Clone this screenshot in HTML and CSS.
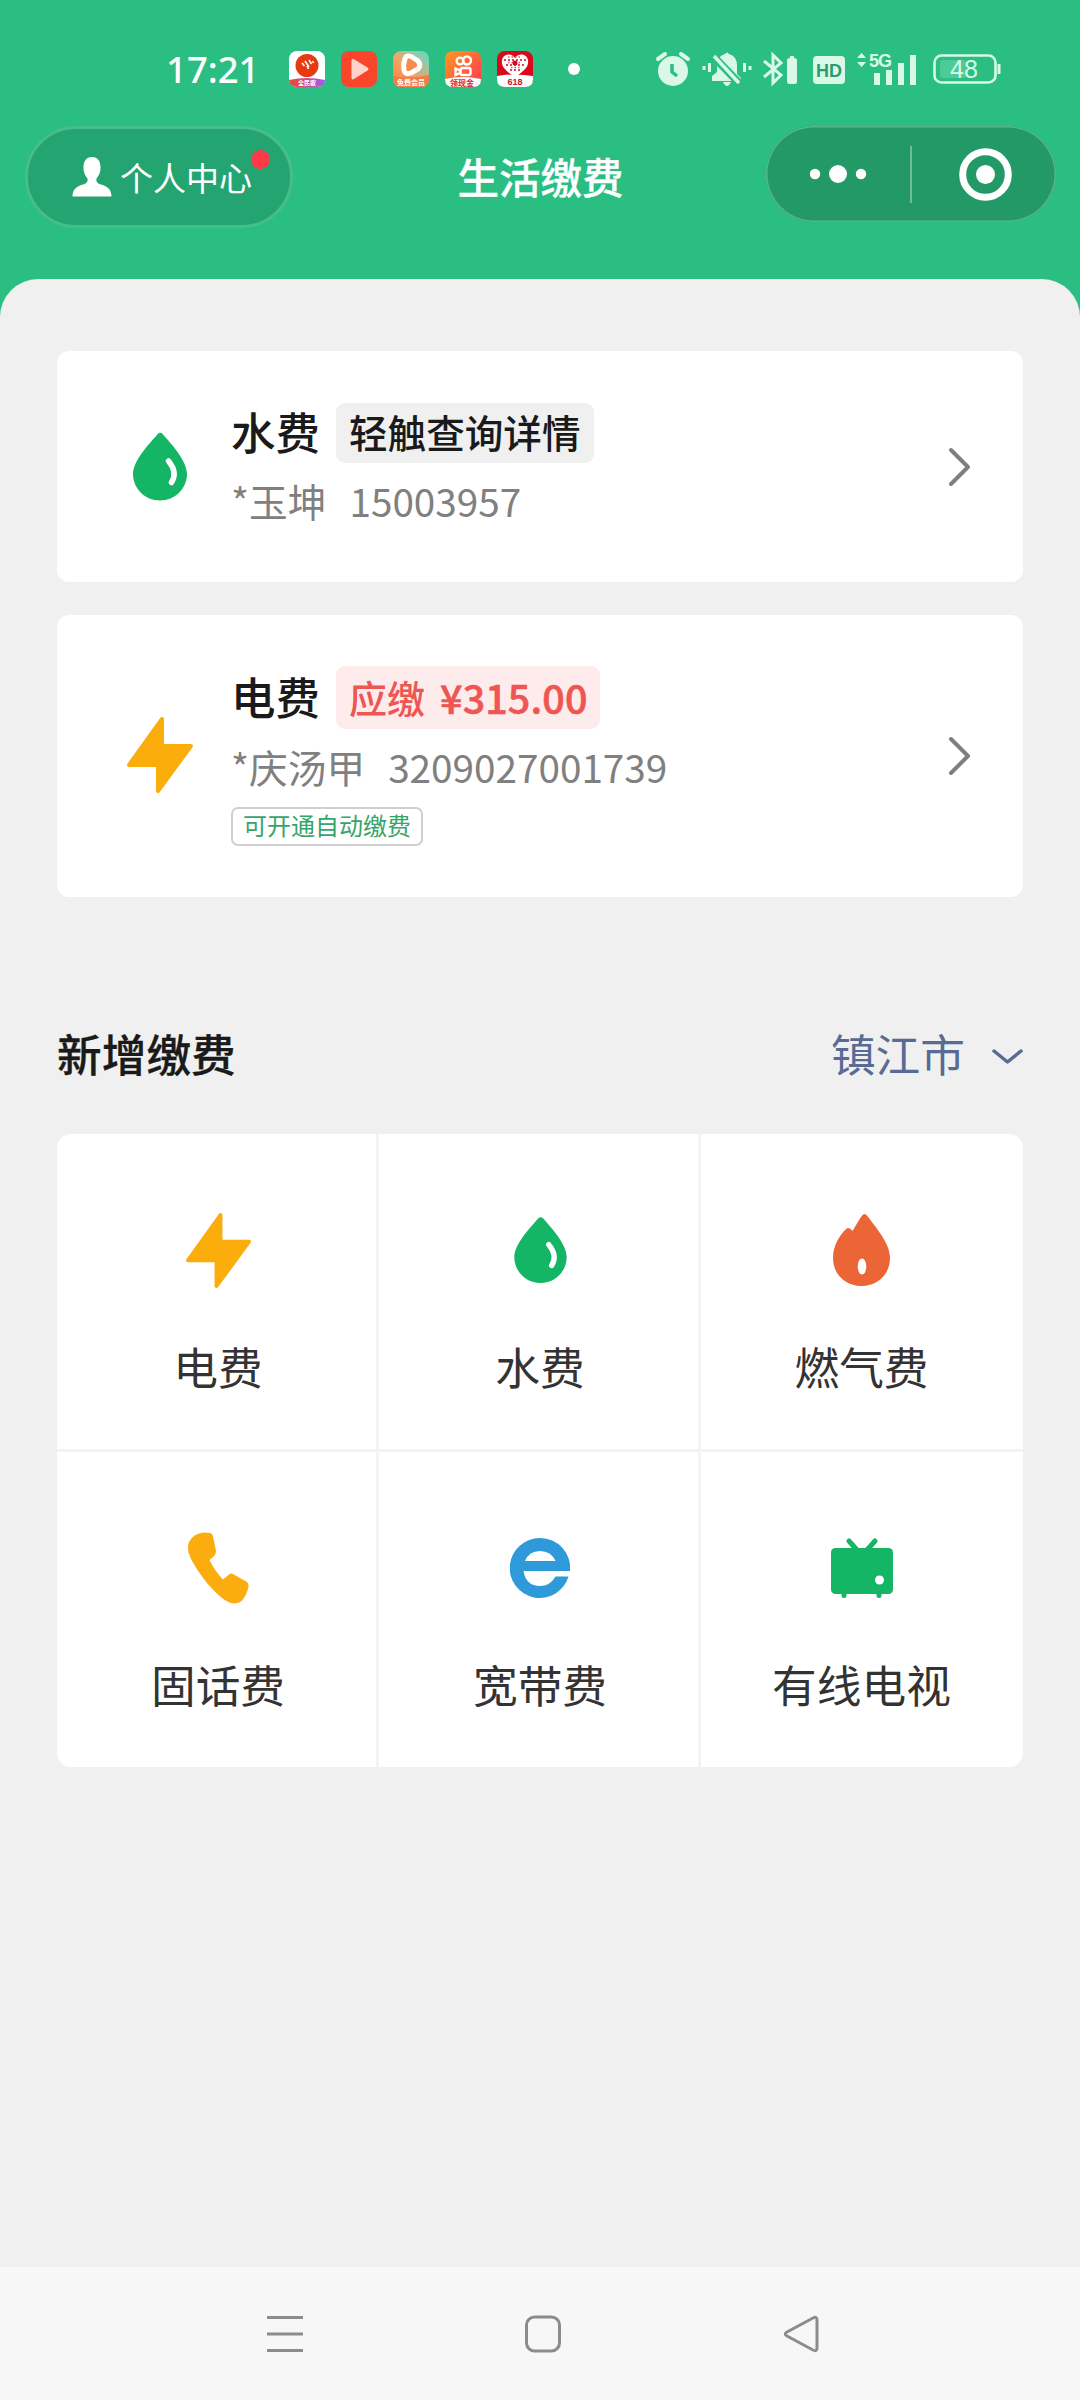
FILE: index.html
```html
<!DOCTYPE html>
<html lang="zh-CN">
<head>
<meta charset="utf-8">
<title>生活缴费</title>
<link rel="stylesheet" href="styles.css">
</head>
<body>
<svg class="defs" width="0" height="0" aria-hidden="true">
  <defs>
    <linearGradient id="g-orange" x1="0" y1="0" x2="1" y2="1"><stop offset="0" stop-color="#ff9a1f"/><stop offset="1" stop-color="#ff3355"/></linearGradient>
    <linearGradient id="g-teal" x1="0" y1="1" x2="1" y2="0"><stop offset="0" stop-color="#ff7a35"/><stop offset=".45" stop-color="#f3a468"/><stop offset="1" stop-color="#55e0d0"/></linearGradient>
    <linearGradient id="g-band" x1="0" y1="0" x2="1" y2="0"><stop offset="0" stop-color="#f2452f"/><stop offset="1" stop-color="#a05af0"/></linearGradient>
    <symbol id="drop" viewBox="0 0 54 68"><path fill="#14b565" d="M24.800 1.400Q27.200-1 29.600 1.400C38 11 54 28 54 41.500C54 56 42 68 27 68S0 56 0 41.500C0 28 16.500 11 24.800 1.400Z"/><path d="M35.500 28.500Q45 40 38.500 50" fill="none" stroke="#fff" stroke-width="5.500" stroke-linecap="round"/></symbol>
    <symbol id="bolt" viewBox="0 0 66 76"><path fill="#fbad0b" stroke="#fbad0b" stroke-width="4" stroke-linejoin="round" d="M35 2V29H64L31 74V48H2Z"/></symbol>
  </defs>
</svg>
<header class="top">
  <div class="status">
    <span class="time">17:21</span>
    <div class="apps">
      <svg class="app" viewBox="0 0 36 36"><rect width="36" height="36" rx="8" fill="#fff"/><path d="M0 29Q18 25 36 29Q35 36 28 36H8Q1 36 0 29Z" fill="url(#g-band)"/><circle cx="18" cy="14.500" r="11.500" fill="#e83a10"/><path d="M13 12l2.500 3M16 10l4 6M20 9l2.500 4M23.500 10l1 2M18 15l1.500 3" stroke="#fff" stroke-width="1.600"/><text x="18" y="34" class="app-text app-text--white app-text--small">全民歌</text></svg>
      <svg class="app" viewBox="0 0 36 36"><rect width="36" height="36" rx="8" fill="#f8452c"/><path d="M10.500 9.500Q10.500 7 13 8.300L26.500 16.500Q28.500 18 26.500 19.500L13 28Q10.500 29.300 10.500 27Z" fill="#ffd3cc"/></svg>
      <svg class="app" viewBox="0 0 36 36"><rect width="36" height="36" rx="8" fill="url(#g-teal)"/><path d="M0 25Q18 28 36 24V28Q36 36 28 36H8Q0 36 0 28Z" fill="#f77b48"/><path d="M12 8Q13 3.500 18 5.500L25 10Q28.500 14 25 18L18 22Q12 24 11 19Q10 13 12 8Z" fill="#f58b4e" stroke="#fff" stroke-width="5"/><text x="18" y="34" class="app-text app-text--white">免费会员</text></svg>
      <svg class="app" viewBox="0 0 36 36"><rect width="36" height="36" rx="8" fill="url(#g-orange)"/><path d="M0 28Q18 24 36 28Q36 36 28 36H8Q0 36 0 28Z" fill="#fff"/><g fill="none" stroke="#fff" stroke-width="2.400"><circle cx="15" cy="10" r="3.400"/><circle cx="22" cy="9.500" r="4"/><rect x="15.500" y="17" width="10" height="7" rx="2"/><path d="M15 19.500L10.500 17.500V24L15 22Z"/></g><text x="17" y="34.500" class="app-text app-text--red">领现金</text></svg>
      <svg class="app" viewBox="0 0 36 36"><rect width="36" height="36" rx="8" fill="#d9081c"/><path d="M0 25Q18 22 36 25V28Q36 36 28 36H8Q0 36 0 28Z" fill="#fff"/><path d="M18 26C9 20 4 16 5 9C6 3 14 1 18 7C22 1 30 3 31 9C32 16 27 20 18 26Z" fill="#fff"/><path d="M7 9h22M9 14h18M13 19h10" stroke="#d9081c" stroke-width="1.700" stroke-dasharray="2 2"/><path d="M11 6h14M11 11.500h14M14 16.500h9" stroke="#e05765" stroke-width="1.500" stroke-dasharray="1.500 2"/><circle cx="18" cy="12" r="2.500" fill="#d9081c"/><text x="18" y="34" class="app-text app-text--618">618</text></svg>
    </div>
    <i class="more-dot"></i>
    <div class="indicators">
      <svg width="34" height="36" viewBox="0 0 34 36"><circle cx="17" cy="20" r="15" fill="#d9f8e8"/><path d="M2 8L9 3M25 3L32 8" stroke="#d9f8e8" stroke-width="4" stroke-linecap="round"/><path d="M16 13V21L21 25" fill="none" stroke="#2abe83" stroke-width="3.500"/></svg>
      <svg class="ind-bell" width="50" height="36" viewBox="0 0 50 36"><path fill="#d9f8e8" d="M23 3Q25 0 27 3Q35 5 35 15V23L39 27V30H10V25L15 21V15Q15 5 23 3ZM21 31h8Q27 35 25 35T21 31Z"/><path d="M10 4L38 33" stroke="#2abe83" stroke-width="8"/><path d="M12 5L37 32" stroke="#d9f8e8" stroke-width="3.500"/><path d="M2 15v4M7.500 12v9M42.500 12v9M48 15v4" stroke="#d9f8e8" stroke-width="3"/></svg>
      <svg class="ind-bt" width="35" height="36" viewBox="0 0 35 36"><path d="M1 10L18 24L10 32V4L18 12L1 26" fill="none" stroke="#d9f8e8" stroke-width="3"/><rect x="24" y="7" width="10" height="26" rx="2.500" fill="#d9f8e8"/><rect x="27" y="5" width="4" height="3" fill="#d9f8e8"/></svg>
      <svg class="ind-hd" width="32" height="36" viewBox="0 0 32 36"><rect y="5" width="32" height="28" rx="4" fill="#d9f8e8"/><text x="16" y="26" class="hd">HD</text></svg>
      <svg class="ind-sig" width="61" height="36" viewBox="0 0 61 36"><path d="M1 7L5.500 2L10 7ZM1 11H10L5.500 16ZM18 22h6v12h-6ZM30 19h6v15h-6ZM42 12h6v22h-6ZM54 4h6v30h-6Z" fill="#d9f8e8"/><text x="13" y="16" class="g5">5G</text></svg>
      <svg class="ind-bat" width="68" height="36" viewBox="0 0 68 36"><rect x="1.500" y="4.500" width="61" height="27" rx="7" fill="none" stroke="#d9f8e8" stroke-width="2.600"/><rect x="7" y="9" width="26" height="18" rx="3" fill="#4dcb97"/><path d="M66 13v10" stroke="#d9f8e8" stroke-width="3"/><text x="31" y="27" class="bat">48</text></svg>
    </div>
  </div>
  <nav class="titlebar">
    <button class="me">
      <svg width="40" height="40" viewBox="0 0 40 40"><path fill="#fff" d="M20 0C26 0 28.500 4.500 28.500 10.500C28.500 16 26.500 19 24.500 21.500C24 25 25 26 29 27.500C36 29.500 39.500 33 39.500 39.500H.5C.5 33 4 29.500 11 27.500C15 26 16 25 15.500 21.500C13.500 19 11.500 16 11.500 10.500C11.500 4.500 14 0 20 0Z"/></svg>
      <span>个人中心</span><i class="badge"></i>
    </button>
    <h1>生活缴费</h1>
    <div class="capsule">
      <svg width="290" height="96" viewBox="0 0 290 96" fill="#fff"><circle cx="49" cy="48" r="5.200"/><circle cx="72" cy="48" r="9"/><circle cx="95" cy="48" r="5.200"/><rect x="144" y="20" width="2" height="57" opacity=".35"/><circle cx="219.500" cy="48.500" r="22.800" fill="none" stroke="#fff" stroke-width="7"/><circle cx="219.500" cy="48.500" r="9.500"/></svg>
    </div>
  </nav>
</header>
<main class="sheet">
  <section class="bills">
    <article class="bill">
      <div class="bill-icon"><svg width="54" height="69"><use href="#drop"/></svg></div>
      <div class="info">
        <div class="head"><h2>水费</h2><span class="tag">轻触查询详情</span></div>
        <p class="account"><span>*玉坤</span><span>15003957</span></p>
      </div>
      <svg class="arrow" width="24" height="40" viewBox="0 0 24 40"><path d="M3 3L20 20L3 37"/></svg>
    </article>
    <article class="bill bill--due">
      <div class="bill-icon"><svg width="66" height="76"><use href="#bolt"/></svg></div>
      <div class="info">
        <div class="head"><h2>电费</h2><span class="tag tag--due"><span>应缴</span><b>¥315.00</b></span></div>
        <p class="account"><span>*庆汤甲</span><span>3209027001739</span></p>
        <span class="auto">可开通自动缴费</span>
      </div>
      <svg class="arrow" width="24" height="40" viewBox="0 0 24 40"><path d="M3 3L20 20L3 37"/></svg>
    </article>
  </section>
  <div class="section-head">
    <h2>新增缴费</h2>
    <div class="city"><span>镇江市</span><svg width="32" height="18" viewBox="0 0 32 18"><path d="M3 3L16.500 14L30 3"/></svg></div>
  </div>
  <section class="grid">
    <div class="cell"><div class="pic"><svg width="65" height="75"><use href="#bolt"/></svg></div><span>电费</span></div>
    <div class="cell"><div class="pic"><svg width="53" height="66"><use href="#drop"/></svg></div><span>水费</span></div>
    <div class="cell"><div class="pic"><svg width="57" height="72" viewBox="0 0 57 72"><path fill="#eb6536" d="M29 1.500Q31.500-1.500 34 1.500C43 14 57 29 57 44C57 60 45 72 28.500 72S0 60 0 44C0 32 6 22 13.500 14.500Q16.500 13 19.500 17C23 11 26 6 29 1.500Z"/><ellipse cx="29" cy="52.500" rx="4.300" ry="8" fill="#fff"/></svg></div><span>燃气费</span></div>
    <div class="cell"><div class="pic"><svg width="62" height="72" viewBox="0 0 62 72"><path fill="#fbad0f" d="M7 4Q14-1 23 1Q25 1 26 4L29 19Q29 22 27 24L22.500 28Q27 38 36 47.500L42 42.500Q44 41 46 42L60 50Q62 52 61.500 55Q59.500 64 54 69.500Q47 74 38.500 68.500C26 60 13 44 4 27Q-3.500 12 7 4Z"/></svg></div><span>固话费</span></div>
    <div class="cell"><div class="pic"><svg width="60" height="60" viewBox="0 0 60 60"><path fill="#2f9ad9" fill-rule="evenodd" d="M30 0A30 30 0 0 1 60 33H13.500Q16 48 30 48Q40 48 45.500 38.500H58.500A30 30 0 1 1 30 0ZM15 23H45.500Q41 13 30 13T15 23Z"/></svg></div><span>宽带费</span></div>
    <div class="cell"><div class="pic"><svg width="62" height="60" viewBox="0 0 62 60"><rect y="10" width="62" height="46" rx="4.500" fill="#14b565"/><path d="M18 3L26 12M44 3L36 12M13 55v2.500M48 55v2.500" stroke="#14b565" stroke-width="5" stroke-linecap="round"/><circle cx="48.500" cy="42" r="4.500" fill="#fff"/></svg></div><span>有线电视</span></div>
  </section>
</main>
<footer class="nav">
  <svg width="36" height="38" viewBox="0 0 36 38"><path d="M0 2.500H36M0 19H36M0 35.500H36"/></svg>
  <svg width="36" height="38" viewBox="0 0 36 38"><rect x="1.500" y="2" width="33" height="34" rx="8"/></svg>
  <svg width="36" height="38" viewBox="0 0 36 38"><path d="M30 3Q34 1 34 5V33Q34 37 30 35L4 21Q.5 19 4 17Z"/></svg>
</footer>
</body>
</html>
```
FILE: styles.css
```css
* { box-sizing: border-box; margin: 0; padding: 0; }

body {
  width: 1080px;
  height: 2400px;
  display: flex;
  flex-direction: column;
  background: #2abe83;
  font-family: "Noto Sans CJK SC", "Noto Sans", sans-serif;
  color: #1a1a1a;
  overflow: hidden;
}

svg { display: block; flex: none; }
.defs { position: absolute; }

/* Header */
.top { height: 279px; flex: none; }

.status {
  height: 126px;
  padding: 51px 0 0 166px;
  display: flex;
  align-items: flex-start;
}
.time {
  width: 123px;
  font: 500 36.500px/36px "Noto Sans", sans-serif;
  color: #fff;
  white-space: nowrap;
}
.apps { display: flex; gap: 16px; }
.app { width: 36px; height: 36px; }
.app-text { font: 700 7px "Noto Sans CJK SC", sans-serif; text-anchor: middle; }
.app-text--white { fill: #fff; }
.app-text--small { font-size: 6px; }
.app-text--red { fill: #d81e20; font-size: 8px; }
.app-text--618 { fill: #c8142a; font: 700 9px "Liberation Sans", sans-serif; }
.more-dot { width: 12px; height: 12px; border-radius: 50%; background: #fff; margin: 12px 0 0 35px; }
.indicators { display: flex; margin-left: 76px; }
.indicators svg { overflow: visible; }
.ind-bell { margin-left: 12px; }
.ind-bt { margin-left: 11px; }
.ind-hd { margin-left: 15px; }
.ind-sig { margin-left: 11px; }
.ind-bat { margin-left: 16px; }
.hd { font: 700 18px "Liberation Sans", sans-serif; text-anchor: middle; fill: #2a9d70; }
.g5 { font: 700 18px "Liberation Sans", sans-serif; letter-spacing: -1px; fill: #d9f8e8; }
.bat { font: 400 25px "Liberation Sans", sans-serif; text-anchor: middle; fill: #d9f8e8; }

.titlebar {
  height: 103px;
  padding: 0 24px 0 25px;
  display: grid;
  grid-template-columns: 290px 1fr 290px;
  align-items: start;
}
.me {
  position: relative;
  width: 268px;
  height: 102px;
  padding-left: 44px;
  display: flex;
  align-items: center;
  gap: 8px;
  border: 3px solid #47bc8c;
  border-radius: 51px;
  background: #24a470;
  color: #fff;
  font: 400 33px/40px "Noto Sans CJK SC", sans-serif;
}
.badge {
  position: absolute;
  left: 223px;
  top: 21px;
  width: 19px;
  height: 19px;
  border-radius: 50%;
  background: #fc3a48;
}
.titlebar h1 {
  padding-top: 25px;
  text-align: center;
  color: #fff;
  font-size: 41.500px;
  line-height: 50px;
  font-weight: 500;
  -webkit-text-stroke: .3px currentColor;
}
.capsule {
  height: 96px;
  border-radius: 48px;
  background: #229967;
  box-shadow: inset 0 0 0 1.500px #59b58c;
}

/* Content sheet */
.sheet {
  flex: 1;
  padding: 72px 57px 0;
  border-radius: 38px 38px 0 0;
  background: #f0f0f0;
}
.bills { display: flex; flex-direction: column; gap: 33px; }
.bill {
  height: 231px;
  padding: 0 51px 0 67px;
  display: flex;
  align-items: center;
  border-radius: 12px;
  background: #fff;
}
.bill--due { height: 282px; }
.bill-icon { width: 72px; display: flex; justify-content: center; margin-right: 35px; }
.bill--due .bill-icon { padding-bottom: 2px; }
.info { flex: 1; }
.head { display: flex; height: 60px; align-items: center; }
.bill--due .head { height: 63px; }
.head h2 {
  width: 105px;
  padding-bottom: 4px;
  font-size: 44.500px;
  line-height: 57px;
  font-weight: 500;
}
.tag {
  height: 100%;
  padding: 0 14px 3px 13px;
  display: flex;
  align-items: center;
  border-radius: 9px;
  background: #f0f0f0;
  font-size: 38.600px;
  line-height: 56px;
  font-weight: 500;
}
.tag--due { padding: 0 12px 2px 13px; gap: 15px; background: #fdeceb; color: #ef5653; font-size: 38px; }
.tag--due b { font-weight: 500; font-size: 39.500px; letter-spacing: .1px; -webkit-text-stroke: .6px currentColor; }
.account {
  margin-top: 7px;
  display: flex;
  gap: 23px;
  font-size: 38.700px;
  line-height: 61px;
  color: #808080;
}
.auto {
  width: 192px;
  height: 39px;
  margin-top: 10px;
  padding-bottom: 3px;
  display: flex;
  align-items: center;
  justify-content: center;
  border: 2px solid #cfcfcf;
  border-radius: 7px;
  color: #36a56a;
  font-size: 24px;
  line-height: 34px;
}
.arrow path { fill: none; stroke: #7f7f7f; stroke-width: 4; stroke-linecap: round; stroke-linejoin: round; }

.section-head {
  height: 237px;
  padding-top: 74px;
  display: flex;
  align-items: center;
  justify-content: space-between;
}
.section-head h2 { font-size: 44.700px; font-weight: 500; line-height: 80px; -webkit-text-stroke: .3px currentColor; }
.city { display: flex; align-items: center; gap: 26px; color: #576b95; font-size: 44.700px; line-height: 80px; }
.city svg { margin-top: 8px; }
.city path { fill: none; stroke: #576b95; stroke-width: 3.500; stroke-linecap: round; stroke-linejoin: round; }

/* Category grid */
.grid {
  height: 633px;
  display: grid;
  grid-template-columns: 319px 319px 322px;
  grid-template-rows: 1fr 1fr;
  gap: 3px;
  overflow: hidden;
  border-radius: 14px;
  background: #f2f3f4;
}
.cell {
  display: flex;
  flex-direction: column;
  align-items: center;
  padding-top: 70px;
  background: #fff;
  color: #333;
  font-size: 44.700px;
  line-height: 64px;
}
.cell:nth-child(3n+1) { padding-left: 3px; }
.cell:nth-child(3n+2) { padding-left: 3px; }
.cell:nth-child(3n) { padding-right: 1px; }
.pic { height: 92px; display: flex; align-items: center; margin-bottom: 38px; }

/* System navigation */
.nav {
  height: 133px;
  padding: 0 261px 0 267px;
  display: flex;
  align-items: center;
  justify-content: space-between;
  background: #f7f7f7;
}
.nav svg { fill: none; stroke: #8c8c8c; stroke-width: 3; }
```
